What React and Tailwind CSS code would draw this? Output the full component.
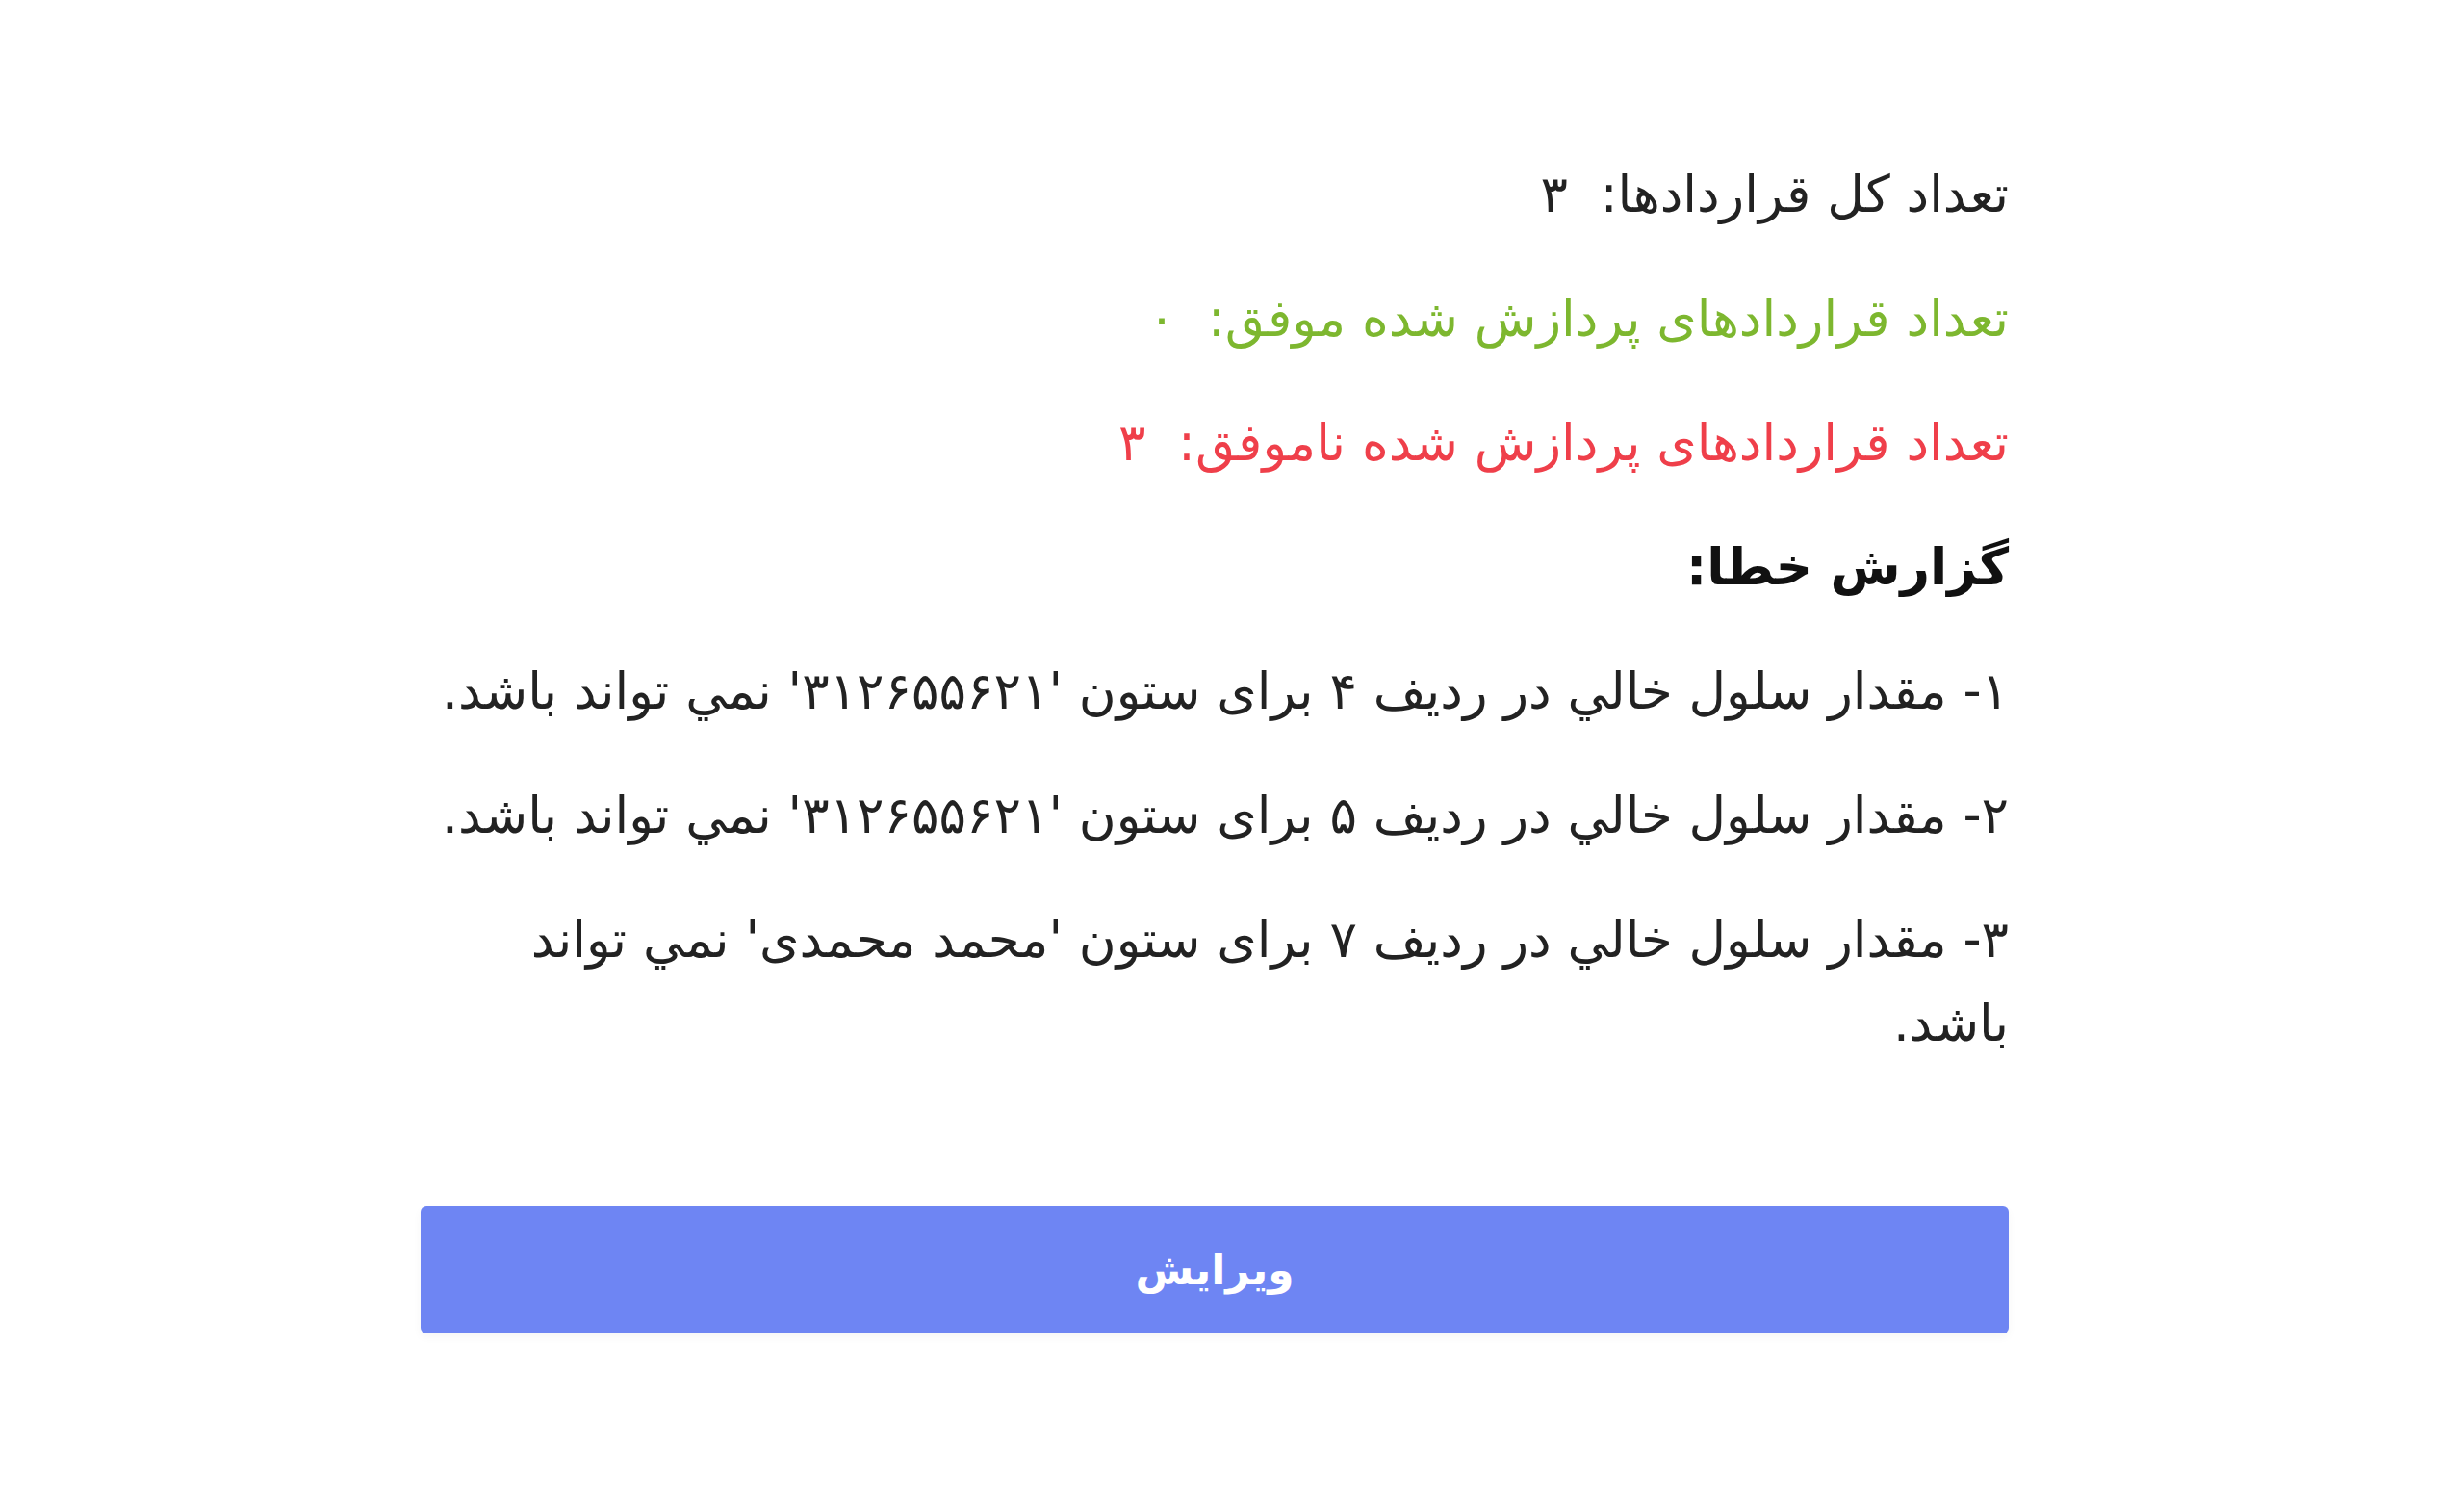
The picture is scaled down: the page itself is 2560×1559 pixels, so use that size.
import React from 'react';

const errors = [
  "۱- مقدار سلول خالي در ردیف ۴ برای ستون '۳۱۲۶۵۵۶۲۱' نمي تواند باشد.",
  "۲- مقدار سلول خالي در ردیف ۵ برای ستون '۳۱۲۶۵۵۶۲۱' نمي تواند باشد.",
  "۳- مقدار سلول خالي در ردیف ۷ برای ستون 'محمد محمدی' نمي تواند باشد.",
];

export default function App() {
  return (
    <div
      className="min-h-screen bg-white pt-[90px] pl-[356px]"
      style={{ fontFamily: '"DejaVu Sans", "Noto Sans", sans-serif' }}
    >
      <div dir="rtl" className="w-[1812px] bg-white rounded-md px-[81px] pt-[68px] pb-[80px]">
        <div className="text-[53px] leading-[87px] text-[#222]">
          <p className="mb-[42px]">تعداد کل قراردادها:&nbsp; ۳</p>
          <p className="mb-[42px] text-[#7db72f]">تعداد قراردادهای پردازش شده موفق:&nbsp; ۰</p>
          <p className="mb-[42px] text-[#ef3f4a]">تعداد قراردادهای پردازش شده ناموفق:&nbsp; ۳</p>
          <p className="mb-[42px] font-bold text-[#111]">گزارش خطا:</p>
          {errors.map((e, i) => (
            <p key={i} className={i < errors.length - 1 ? 'mb-[42px]' : ''}>{e}</p>
          ))}
        </div>
        <button className="mt-[147px] w-full h-[132px] rounded-md bg-[#6e85f3] text-white text-[44px] font-bold shadow-[0_4px_10px_rgba(0,0,0,0.04)]">
          ویرایش
        </button>
      </div>
    </div>
  );
}
